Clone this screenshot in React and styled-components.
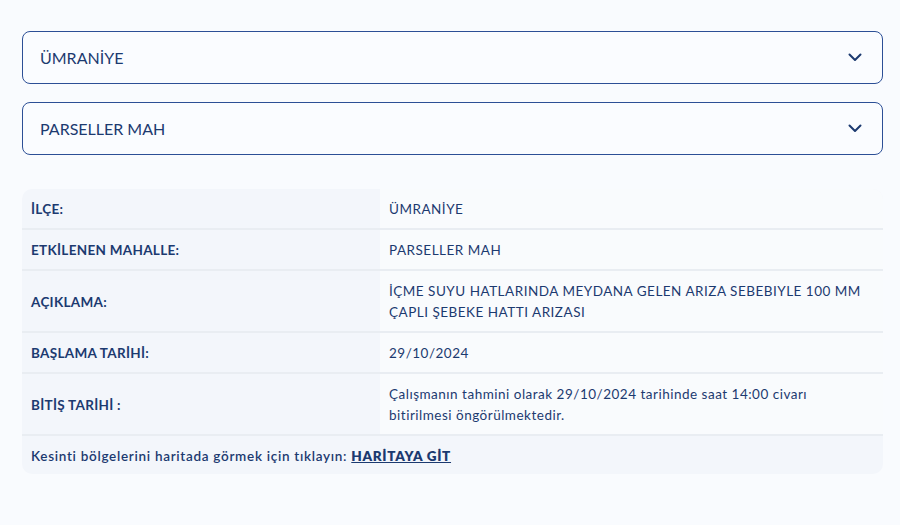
import React from 'react';
import styled, { createGlobalStyle } from 'styled-components';

const GlobalStyle = createGlobalStyle`
    body {
        margin: 0;
        background: #f9fbfe;
        font-family: Lato, "Noto Sans", sans-serif;
        color: #1c3a70;
    }
`;

const districts = ['ÜMRANİYE'];
const neighbourhoods = ['PARSELLER MAH'];

const rows = [
    { label: 'İLÇE:', value: 'ÜMRANİYE' },
    { label: 'ETKİLENEN MAHALLE:', value: 'PARSELLER MAH' },
    { label: 'AÇIKLAMA:', value: 'İÇME SUYU HATLARINDA MEYDANA GELEN ARIZA SEBEBIYLE 100 MM ÇAPLI ŞEBEKE HATTI ARIZASI' },
    { label: 'BAŞLAMA TARİHİ:', value: '29/10/2024' },
    { label: 'BİTİŞ TARİHİ :', value: 'Çalışmanın tahmini olarak 29/10/2024 tarihinde saat 14:00 civarı bitirilmesi öngörülmektedir.' },
];

const Chevron = () => (
    <svg width="14" height="9" viewBox="0 0 14 9" fill="none">
        <path d="M1.5 1.5 L7 7 L12.5 1.5" stroke="#1c3a70" strokeWidth="2" strokeLinecap="round" strokeLinejoin="round" />
    </svg>
);

const Select = ({ value }) => (
    <SelectBox>
        <span>{value}</span>
        <Chevron />
    </SelectBox>
);

const App = () => {
    return (<>
        <GlobalStyle />
        <Page>
            <Select value={districts[0]} />
            <Select value={neighbourhoods[0]} />
            <InfoTable>
                {rows.map((row, idx) => (
                    <Row key={idx}>
                        <Label>{row.label}</Label>
                        <Value>{row.value}</Value>
                    </Row>
                ))}
                <Footer>
                    Kesinti bölgelerini haritada görmek için tıklayın: <a href="#harita">HARİTAYA GİT</a>
                </Footer>
            </InfoTable>
        </Page>
    </>);
}

export default App;

const Page = styled.div`
    display: flex;
    flex-direction: column;
    gap: 18px;
    padding: 31px 17px 40px 22px;
`

const SelectBox = styled.div`
    display: flex;
    align-items: center;
    justify-content: space-between;
    height: 51px;
    padding: 0 20px 0 17px;
    border: 1px solid #2c4f96;
    border-radius: 8px;
    background: #fafcff;
    font-size: 16px;
    color: #1c3a70;
    svg {
        display: block;
    }
`

const InfoTable = styled.div`
    margin-top: 16px;
    border-radius: 10px;
    overflow: hidden;
    background: #f3f6fb;
`

const Row = styled.div`
    display: grid;
    grid-template-columns: 358px 1fr;
    border-bottom: 2px solid #e9edf2;
`

const Label = styled.div`
    display: flex;
    align-items: center;
    padding: 10px 9px 8px;
    font-size: 13.5px;
    font-weight: 700;
    letter-spacing: 0.3px;
    line-height: 21px;
    color: #1c3a70;
`

const Value = styled.div`
    display: flex;
    align-items: center;
    padding: 10px 20px 8px 9px;
    background: #f9fbfd;
    font-size: 13.5px;
    letter-spacing: 0.5px;
    line-height: 21px;
    color: #1c3a70;
`

const Footer = styled.div`
    padding: 10px 9px 8px;
    font-size: 13.5px;
    font-weight: 600;
    letter-spacing: 0.7px;
    line-height: 20px;
    color: #1c3a70;
    a {
        color: #1c3a70;
        font-weight: 800;
        text-decoration: underline;
    }
`
